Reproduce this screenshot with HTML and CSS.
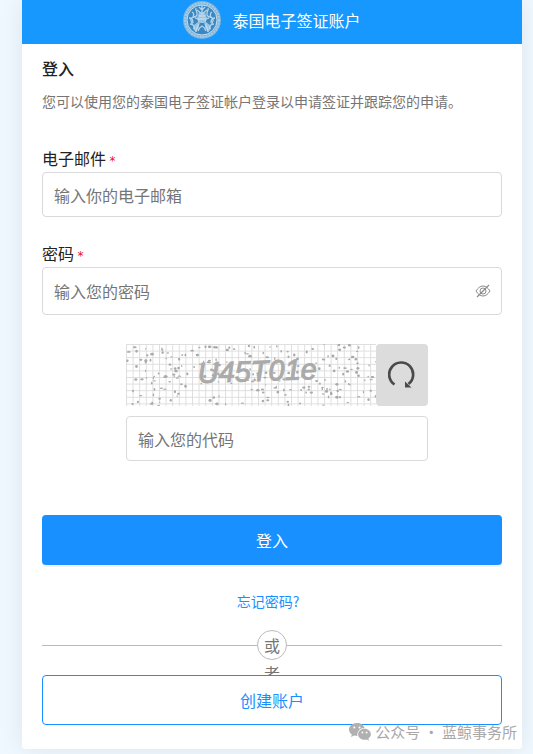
FILE: index.html
```html
<!DOCTYPE html>
<html lang="zh-CN">
<head>
    <meta charset="UTF-8">
    <meta name="viewport" content="width=device-width, initial-scale=1.0">
    <title>泰国电子签证账户</title>
    <link rel="stylesheet" href="styles.css">
</head>
<body>
    <main class="card">
        <header class="card-header">
            <svg class="emblem" viewBox="0 0 38 38" aria-hidden="true">
                <circle cx="19" cy="19" r="19" fill="#7fb4da"/>
                <circle cx="19" cy="19" r="17" fill="none" stroke="#a9cce6" stroke-width="2" stroke-dasharray="2 1"/>
                <circle cx="19" cy="19" r="15" fill="#3a87c2" stroke="#c3deef"/>
                <g fill="none" stroke="#b5d6ec" stroke-width="1.300">
                    <path d="M19 4v9M16 6l3 3 3-3M14 9l5 4 5-4M16 15h6M15 18h8"/>
                    <path d="M13 7c-1 3 2 4 1 7s-5 1-6 4 2 3 1 6M25 7c1 3-2 4-1 7s5 1 6 4-2 3-1 6"/>
                    <path d="M9 11c2 1 2 3 1 5M29 11c-2 1-2 3-1 5M6 17c3 0 4 2 4 5M32 17c-3 0-4 2-4 5"/>
                    <path d="M12 17c2 0 4 2 4 5s-3 4-3 9M26 17c-2 0-4 2-4 5s3 4 3 9"/>
                    <path d="M7 23c3 0 5 2 4 5M31 23c-3 0-5 2-4 5M15 30c1-3 2-4 4-5 2 1 3 2 4 5"/>
                </g>
                <path d="M16 11l3 2 3-2 2 6-3 5h-4l-3-5zM11 24l4-3 1 5-3 5-3-3zM27 24l-4-3-1 5 3 5 3-3z" fill="#c3deef" opacity=".7"/>
            </svg>
            <span>泰国电子签证账户</span>
        </header>

        <form class="login-form">
            <h1>登入</h1>
            <p class="intro">您可以使用您的泰国电子签证帐户登录以申请签证并跟踪您的申请。</p>

            <div class="form-group">
                <label for="email">电子邮件 <span class="required">*</span></label>
                <input type="email" id="email" placeholder="输入你的电子邮箱">
            </div>

            <div class="form-group">
                <label for="password">密码 <span class="required">*</span></label>
                <div class="password-box">
                    <input type="password" id="password" placeholder="输入您的密码">
                    <button type="button" class="toggle-password" aria-label="显示密码">
                        <svg viewBox="0 0 16 16" fill="none" stroke="#8c8c8c">
                            <path d="M1 8c2-3 4-5 7-5s5 2 7 5c-2 3-4 5-7 5s-5-2-7-5z"/>
                            <circle cx="8" cy="8" r="3"/>
                            <path d="M2 14L14 2" stroke-width="1.3"/>
                        </svg>
                    </button>
                </div>
            </div>

            <div class="captcha">
                <div class="captcha-row">
                    <svg class="captcha-image" viewBox="0 0 250 62" role="img" aria-label="验证码">
                        <defs>
                            <pattern id="grid" width="6.6" height="6.6" patternUnits="userSpaceOnUse">
                                <path d="M.5 0v6.6M0 .5h6.6" stroke="#dedede" stroke-width="1"/>
                            </pattern>
                        </defs>
                        <rect width="250" height="62" fill="#fff"/>
                        <rect width="250" height="62" fill="url(#grid)"/>
                        <g id="specks" fill="#aaa"></g>
                        <text class="captcha-text" x="72" y="39" transform="rotate(-2 72 39)">U45T01e</text>
                    </svg>
                    <button type="button" class="refresh" aria-label="刷新验证码">
                        <svg viewBox="0 0 28 28" fill="none">
                            <path d="M6.500 23.500A12 12 0 1 1 20.500 23" stroke="#4a4a4a" stroke-width="2.700"/>
                            <path d="M17 20.500v6h6.500z" fill="#4a4a4a"/>
                        </svg>
                    </button>
                </div>
                <input type="text" id="code" placeholder="输入您的代码" aria-label="输入您的代码">
            </div>

            <button type="submit" class="btn btn-primary">登入</button>
            <a href="#" class="forgot">忘记密码?</a>
            <div class="divider"><span>或者</span></div>
            <button type="button" class="btn btn-outline">创建账户</button>
        </form>
    </main>

    <div class="watermark">
        <svg viewBox="0 0 22 18" aria-hidden="true">
            <path fill="#b0b0b0" d="M8 0C3.500 0 0 3 0 6.500c0 2 1 3.700 2.800 5L2 14l3-1.500c1 .3 2 .4 3.300.4C8 8.500 11 5 15.500 5 14.800 2 11.800 0 8 0z"/>
            <path fill="#b0b0b0" d="M15.500 5.700c-3.700 0-6.400 2.500-6.400 5.500s2.700 5.500 6.400 5.500c.8 0 1.500-.1 2.200-.3L20 17.700l-.6-2.300c1.500-1 2.500-2.500 2.500-4.200 0-3-2.800-5.500-6.400-5.500z"/>
            <g fill="#fff">
                <circle cx="5.300" cy="4.500" r="1"/>
                <circle cx="10.500" cy="4.500" r="1"/>
                <circle cx="13.400" cy="9.500" r=".9"/>
                <circle cx="17.600" cy="9.500" r=".9"/>
            </g>
        </svg>
        <span>公众号 · 蓝鲸事务所</span>
    </div>

    <script src="script.js"></script>
</body>
</html>
```
FILE: styles.css
```css
* {
    margin: 0;
    padding: 0;
    box-sizing: border-box;
    font-family: 'Noto Sans CJK SC', sans-serif;
}

body {
    position: relative;
    background: #eff7ff;
    padding: 0 11px 5px 22px;
    font-size: 16px;
    line-height: 24px;
    color: #222;
}

.card {
    background: #fff;
    border-radius: 0 0 4px 4px;
    box-shadow: 0 0 24px rgba(0, 0, 0, 0.08);
}

.card-header {
    display: flex;
    justify-content: center;
    align-items: center;
    gap: 11px;
    height: 44px;
    padding-bottom: 4px;
    background: #1698ff;
    color: #fff;
}

.emblem {
    width: 38px;
    height: 38px;
}

.login-form {
    display: flex;
    flex-direction: column;
    padding: 12px 20px 24px;
}

h1 {
    font-size: 16px;
    line-height: 24px;
    font-weight: 500;
}

.intro {
    margin: 10px 0 34px;
    font-size: 14px;
    line-height: 22px;
    color: #757575;
}

.form-group {
    margin-bottom: 24px;
}

label {
    display: block;
    margin-bottom: 2px;
}

.required {
    font-family: 'DejaVu Sans', sans-serif;
    font-size: 12px;
    line-height: 12px;
    color: #e8132b;
}

input {
    display: block;
    width: 100%;
    height: 45px;
    padding: 0 11px;
    border: 1px solid #d9d9d9;
    border-radius: 4px;
    background: #fff;
    font-size: 16px;
    color: #222;
}

input::placeholder {
    color: #757575;
}

input:focus {
    outline: none;
    border-color: #1890ff;
}

button {
    border: none;
    cursor: pointer;
}

.password-box {
    display: flex;
    align-items: center;
    height: 48px;
    padding-right: 10px;
    border: 1px solid #d9d9d9;
    border-radius: 4px;
}

.password-box input {
    height: 44px;
    border: none;
}

.toggle-password {
    width: 16px;
    height: 16px;
    flex-shrink: 0;
    background: none;
}

.toggle-password svg {
    display: block;
}

.captcha {
    display: flex;
    flex-direction: column;
    gap: 10px;
    width: 302px;
    margin: 5px auto 54px 84px;
}

.captcha-row {
    display: flex;
    height: 62px;
}

.captcha-image {
    width: 250px;
    height: 62px;
}

.captcha-text {
    font-family: 'Liberation Sans', sans-serif;
    font-size: 29px;
    font-style: italic;
    fill: #aaa;
    stroke: #aaa;
    stroke-width: 1px;
}

.refresh {
    display: flex;
    justify-content: center;
    align-items: center;
    flex: 1;
    border-radius: 4px;
    background: #dcdcdc;
}

.refresh svg {
    width: 28px;
    height: 28px;
}

.btn {
    width: 100%;
    height: 50px;
    border-radius: 4px;
    font-size: 16px;
}

.btn-primary {
    background: #1890ff;
    color: #fff;
    box-shadow: 0 2px 0 rgba(0, 0, 0, 0.05);
}

.btn-outline {
    position: relative;
    border: 1px solid #1890ff;
    background: #fff;
    color: #1890ff;
}

.forgot {
    align-self: center;
    margin: 25px 0 18px;
    padding-right: 8px;
    font-size: 14px;
    line-height: 22px;
    color: #1890ff;
    text-decoration: none;
}

.divider {
    display: flex;
    align-items: center;
    margin-bottom: 15px;
    color: #757575;
}

.divider::before,
.divider::after {
    content: "";
    flex: 1;
    height: 1px;
    background: #bbb;
}

/* the label wraps, only its first character fits in the circle */
.divider span {
    width: 30px;
    height: 30px;
    border: 1px solid #bbb;
    border-radius: 50%;
    line-height: 28px;
    text-align: center;
}

.watermark {
    position: absolute;
    right: 16px;
    bottom: 10px;
    display: flex;
    align-items: center;
    gap: 4px;
    font-size: 15px;
    color: #a8a8a8;
}

.watermark svg {
    width: 22px;
    height: 18px;
}
```
FILE: script.js
```js
// scatter the noise over the captcha image
const specks = document.getElementById('specks');
let seed = 4501;

function random() {
    seed = (seed * 16807) % 2147483647;
    return seed / 2147483647;
}

for (let i = 0; i < 230; i++) {
    const speck = document.createElementNS('http://www.w3.org/2000/svg', 'ellipse');
    speck.setAttribute('cx', random() * 250);
    speck.setAttribute('cy', random() * 62);
    speck.setAttribute('rx', 0.6 + random() * 1.3);
    speck.setAttribute('ry', 0.6 + random() * 0.9);
    specks.appendChild(speck);
}
```
